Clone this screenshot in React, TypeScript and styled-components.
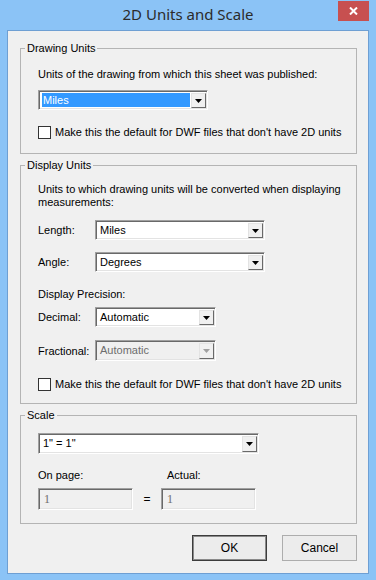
import styled, { createGlobalStyle } from "styled-components"

const GlobalStyle = createGlobalStyle`
  html, body { margin: 0; padding: 0; background: #8bc3f6; }
  body {
    font-family: "Liberation Sans", Arial, sans-serif;
    font-size: 11px;
    color: #000;
  }
`

const Arrow = ({ disabled }: { disabled?: boolean }) => (
  <svg width="7" height="4" viewBox="0 0 7 4">
    <polygon points="0,0 7,0 3.5,4" fill={disabled ? "#a0a0a0" : "#000"} />
  </svg>
)

interface ComboProps {
  width: number
  height?: number
  value: string
  selected?: boolean
  disabled?: boolean
}

const ComboBox: React.FC<ComboProps> = ({ width, height = 20, value, selected, disabled }) => (
  <Combo $w={width} $h={height} $disabled={disabled}>
    <ComboValue $selected={selected} $disabled={disabled}>
      {value}
    </ComboValue>
    <DropButton>
      <Arrow disabled={disabled} />
    </DropButton>
  </Combo>
)

const CheckRow: React.FC<{ label: string }> = ({ label }) => (
  <Check>
    <CheckBox />
    <span>{label}</span>
  </Check>
)

const App = () => {
  return (
    <>
      <GlobalStyle />
      <Window>
        <TitleBar>
          <Title>2D Units and Scale</Title>
          <CloseButton>
            <svg width="9" height="8" viewBox="0 0 9 8">
              <path d="M1 0.5 L8 7.5 M8 0.5 L1 7.5" stroke="#fff" strokeWidth="2" />
            </svg>
          </CloseButton>
        </TitleBar>
        <Client>
          <Group>
            <Legend>Drawing Units</Legend>
            <GroupBody $pb={14}>
              <Text $mt={12}>Units of the drawing from which this sheet was published:</Text>
              <Spaced $mt={9}>
                <ComboBox width={170} value="Miles" selected />
              </Spaced>
              <Spaced $mt={15}>
                <CheckRow label="Make this the default for DWF files that don't have 2D units" />
              </Spaced>
            </GroupBody>
          </Group>

          <Group $mt={4}>
            <Legend>Display Units</Legend>
            <GroupBody $pb={12}>
              <Paragraph>
                Units to which drawing units will be converted when displaying measurements:
              </Paragraph>
              <Row $mt={11}>
                <Label>Length:</Label>
                <ComboBox width={170} value="Miles" />
              </Row>
              <Row $mt={12}>
                <Label>Angle:</Label>
                <ComboBox width={170} value="Degrees" />
              </Row>
              <Text $mt={15}>Display Precision:</Text>
              <Row $mt={6}>
                <Label>Decimal:</Label>
                <ComboBox width={121} value="Automatic" />
              </Row>
              <Row $mt={13}>
                <Label>Fractional:</Label>
                <ComboBox width={121} height={21} value="Automatic" disabled />
              </Row>
              <Spaced $mt={16}>
                <CheckRow label="Make this the default for DWF files that don't have 2D units" />
              </Spaced>
            </GroupBody>
          </Group>

          <Group $mt={4}>
            <Legend>Scale</Legend>
            <GroupBody $pb={13}>
              <Spaced $mt={11}>
                <ComboBox width={221} height={21} value={'1" = 1"'} />
              </Spaced>
              <ScaleGrid>
                <Text>On page:</Text>
                <span />
                <Text $pl={6}>Actual:</Text>
                <Field>1</Field>
                <Equals>=</Equals>
                <Field>1</Field>
              </ScaleGrid>
            </GroupBody>
          </Group>

          <Buttons>
            <Button $default>OK</Button>
            <Button>Cancel</Button>
          </Buttons>
        </Client>
      </Window>
    </>
  )
}

export default App

const Window = styled.div`
  width: 376px;
  height: 580px;
  display: flex;
  flex-direction: column;
  background: #8bc3f6;
`
const TitleBar = styled.div`
  height: 30px;
  display: grid;
  grid-template-columns: 1fr auto 1fr;
  align-items: start;
`
const Title = styled.div`
  grid-column: 2;
  font-family: "Noto Sans", "Open Sans", sans-serif;
  font-size: 15px;
  line-height: 29px;
  color: #2b2b2b;
`
const CloseButton = styled.div`
  grid-column: 3;
  justify-self: end;
  width: 31px;
  height: 20px;
  margin: 1px 7px 0 0;
  background: #c75050;
  display: flex;
  align-items: center;
  justify-content: center;
`
const Client = styled.div`
  flex: 1;
  margin: 0 7px 6px 7px;
  border: 1px solid #6e9fd3;
  background: #f0f0f0;
  padding: 10px 11px 0 12px;
`
const Group = styled.fieldset<{ $mt?: number }>`
  margin: ${p => p.$mt ?? 0}px 0 0 0;
  padding: 0;
  border: 1px solid #b4b4b4;
  min-inline-size: 0;
`
const Legend = styled.legend`
  margin-left: 4px;
  padding: 0 2px;
  line-height: 14px;
`
const GroupBody = styled.div<{ $pb: number }>`
  padding: 0 0 ${p => p.$pb}px 17px;
  display: flex;
  flex-direction: column;
  align-items: flex-start;
`
const Text = styled.div<{ $mt?: number; $pl?: number }>`
  margin-top: ${p => p.$mt ?? 0}px;
  padding-left: ${p => p.$pl ?? 0}px;
  line-height: 14px;
`
const Paragraph = styled.div`
  margin-top: 11px;
  line-height: 13px;
  width: 312px;
`
const Spaced = styled.div<{ $mt: number }>`
  margin-top: ${p => p.$mt}px;
`
const Row = styled.div<{ $mt: number }>`
  margin-top: ${p => p.$mt}px;
  display: flex;
  align-items: center;
`
const Label = styled.div`
  width: 57px;
  line-height: 14px;
`
const Combo = styled.div<{ $w: number; $h: number; $disabled?: boolean }>`
  width: ${p => p.$w}px;
  height: ${p => p.$h}px;
  box-sizing: border-box;
  display: flex;
  border-style: solid;
  border-width: 1px;
  border-color: #a0a0a0 #fff #fff #a0a0a0;
  box-shadow: inset 1px 1px 0 #696969, inset -1px -1px 0 #e3e3e3;
  background: ${p => (p.$disabled ? "#f0f0f0" : "#fff")};
  padding: 2px 1px 1px 2px;
`
const ComboValue = styled.div<{ $selected?: boolean; $disabled?: boolean }>`
  flex: 1;
  margin: 0 1px 1px 1px;
  padding-left: 1px;
  line-height: 15px;
  background: ${p => (p.$selected ? "#3399ff" : "transparent")};
  color: ${p => (p.$selected ? "#fff" : p.$disabled ? "#6d6d6d" : "#000")};
`
const DropButton = styled.div`
  width: 15px;
  box-sizing: border-box;
  background: #f0f0f0;
  border-style: solid;
  border-width: 1px;
  border-color: #e3e3e3 #696969 #696969 #e3e3e3;
  display: flex;
  align-items: center;
  justify-content: center;
`
const Check = styled.label`
  display: flex;
  align-items: center;
  gap: 4px;
  line-height: 14px;
`
const CheckBox = styled.span`
  width: 13px;
  height: 13px;
  box-sizing: border-box;
  border: 1px solid #333;
  background: #fff;
`
const ScaleGrid = styled.div`
  margin-top: 14px;
  display: grid;
  grid-template-columns: 95px 28px 95px;
  grid-template-rows: 14px 22px;
  row-gap: 6px;
  align-items: center;
`
const Field = styled.div`
  height: 22px;
  box-sizing: border-box;
  border-style: solid;
  border-width: 1px;
  border-color: #a0a0a0 #fff #fff #a0a0a0;
  box-shadow: inset 1px 1px 0 #696969, inset -1px -1px 0 #e3e3e3;
  padding: 3px 5px;
  font-family: "Liberation Serif", serif;
  font-size: 12px;
  line-height: 14px;
  color: #6d6d6d;
`
const Equals = styled.div`
  text-align: center;
  font-size: 12px;
`
const Buttons = styled.div`
  margin-top: 11px;
  display: flex;
  justify-content: flex-end;
  gap: 15px;
`
const Button = styled.div<{ $default?: boolean }>`
  width: 75px;
  height: 26px;
  box-sizing: border-box;
  display: flex;
  align-items: center;
  justify-content: center;
  background: #ececec;
  border: 1px solid ${p => (p.$default ? "#3c3c3c" : "#adadad")};
  box-shadow: ${p => (p.$default ? "inset 0 0 0 1px #8a8a8a" : "none")};
  font-size: 12px;
`
